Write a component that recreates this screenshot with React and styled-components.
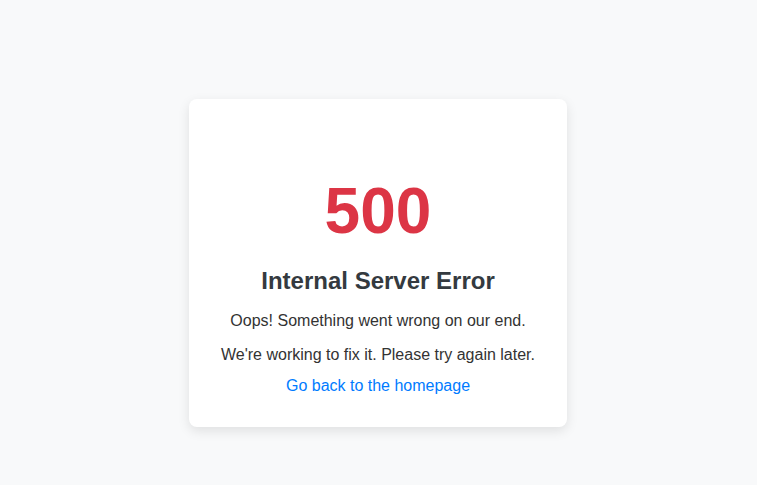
import styled, { createGlobalStyle } from 'styled-components'

const GlobalStyle = createGlobalStyle`
  * {
    margin: 0;
    padding: 0;
    box-sizing: border-box;
  }

  body {
    background-color: #f8f9fa;
    font-family: 'Liberation Sans', Arial, sans-serif;
    color: #333;
  }
`

const Page = styled.main`
  display: flex;
  justify-content: center;
  align-items: flex-start;
  width: 100vw;
  height: 100vh;
  padding-top: 99px;
  padding-right: 1px;
`

const Card = styled.div`
  width: 378px;
  height: 328px;
  padding: 0 24px;
  background-color: #fff;
  border-radius: 8px;
  box-shadow: 0 4px 12px rgba(0, 0, 0, 0.1);
  display: flex;
  flex-direction: column;
  align-items: center;
  text-align: center;
`

const Code = styled.h1`
  margin-top: 74px;
  font-size: 64px;
  line-height: 1.2;
  font-weight: 700;
  color: #dc3545;
`

const Title = styled.h2`
  margin-top: 17px;
  font-size: 24px;
  line-height: 1.2;
  font-weight: 700;
  color: #343a40;
`

const Text = styled.p`
  margin-top: ${({ gap }) => gap}px;
  font-size: 16px;
  line-height: 24px;
  color: #333;
  white-space: nowrap;
`

const HomeLink = styled.a`
  margin-top: 7px;
  font-size: 16px;
  line-height: 24px;
  color: #007bff;
  text-decoration: none;
`

function App() {
  return (
    <Page>
      <GlobalStyle />
      <Card>
        <Code>500</Code>
        <Title>Internal Server Error</Title>
        <Text gap={13}>Oops! Something went wrong on our end.</Text>
        <Text gap={10}>We're working to fix it. Please try again later.</Text>
        <HomeLink href="#">Go back to the homepage</HomeLink>
      </Card>
    </Page>
  )
}

export default App
